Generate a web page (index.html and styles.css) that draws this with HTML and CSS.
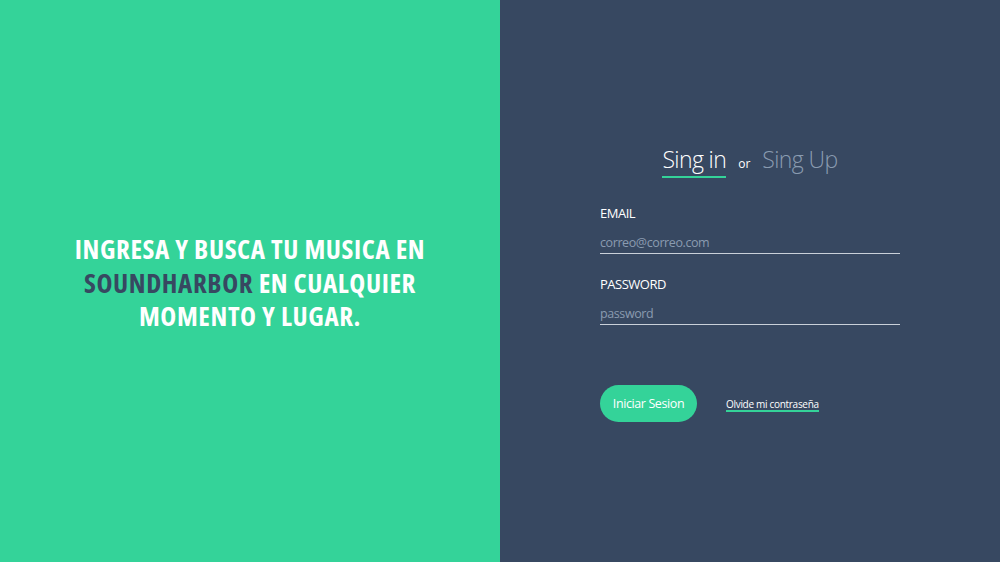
FILE: index.html
```html
<!DOCTYPE html>
<html lang="es">
<head>
<meta charset="utf-8">
<title>SoundHarbor</title>
<link rel="stylesheet" href="styles.css">
</head>
<body>
<div class="page">
  <section class="hero">
    <h1 class="hero-title">INGRESA Y BUSCA TU MUSICA EN <span class="brand">SOUNDHARBOR</span> EN CUALQUIER MOMENTO Y LUGAR.</h1>
  </section>
  <section class="panel">
    <form class="form">
      <div class="tabs">
        <a class="tab active">Sing in</a>
        <span class="or">or</span>
        <a class="tab">Sing Up</a>
      </div>
      <label class="field">
        <span class="label">EMAIL</span>
        <input class="input" type="text" placeholder="correo@correo.com">
      </label>
      <label class="field">
        <span class="label">PASSWORD</span>
        <input class="input" type="password" placeholder="password">
      </label>
      <div class="actions">
        <button class="btn" type="button">Iniciar Sesion</button>
        <a class="link">Olvide mi contraseña</a>
      </div>
    </form>
  </section>
</div>
</body>
</html>
```
FILE: styles.css
```css
* { box-sizing: border-box; }
html, body { margin: 0; padding: 0; height: 100%; }
body {
  font-family: "Open Sans", "Noto Sans", sans-serif;
}
.page {
  display: grid;
  grid-template-columns: 500px 500px;
  height: 562px;
}
.hero {
  background: #34d399;
  display: flex;
  align-items: center;
  justify-content: center;
  padding-top: 3px;
}
.hero-title {
  margin: 0;
  width: 380px;
  color: #fff;
  font-size: 27px;
  line-height: 33.5px;
  font-weight: 700;
  text-align: center;
  letter-spacing: 0.6px;
  font-stretch: condensed;
}
.brand { color: #374861; }
.panel {
  background: #374861;
  display: flex;
  justify-content: center;
  padding-top: 143px;
}
.form {
  width: 300px;
  display: flex;
  flex-direction: column;
}
.tabs {
  display: flex;
  justify-content: center;
  align-items: baseline;
  gap: 12px;
  margin-bottom: 26px;
}
.tab {
  font-size: 23px;
  font-weight: 300;
  color: #8a9bb0;
  letter-spacing: -0.6px;
  padding-bottom: 1px;
}
.tab.active {
  color: #fff;
  border-bottom: 2px solid #34d399;
}
.or {
  font-size: 12px;
  color: #fff;
}
.field {
  display: flex;
  flex-direction: column;
  margin-bottom: 21px;
}
.label {
  color: #fff;
  font-size: 13px;
  letter-spacing: -0.5px;
  margin-bottom: 12px;
}
.input {
  background: transparent;
  border: none;
  border-bottom: 1px solid #c9d0d9;
  color: #fff;
  font-family: inherit;
  font-size: 12.5px;
  letter-spacing: -0.4px;
  padding: 0 0 2px 0;
  outline: none;
}
.input::placeholder { color: #8a9bb0; }
.actions {
  display: flex;
  align-items: center;
  gap: 29px;
  margin-top: 39px;
}
.btn {
  background: #34d399;
  border: none;
  border-radius: 20px;
  color: #fff;
  font-family: inherit;
  font-size: 12.5px;
  letter-spacing: -0.4px;
  width: 97px;
  height: 37px;
  padding: 0;
}
.link {
  color: #fff;
  font-size: 10px;
  letter-spacing: -0.3px;
  border-bottom: 2px solid #34d399;
  line-height: 12px;
  margin-top: 2px;
}
```
